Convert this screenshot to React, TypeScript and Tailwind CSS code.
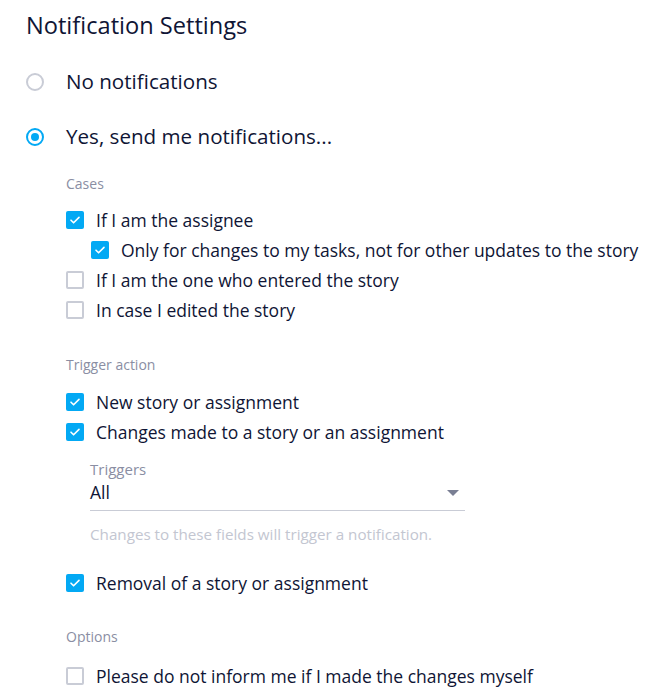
import React, { useState } from 'react';

const Check: React.FC<{ checked: boolean; onChange: () => void; label: string }> = ({ checked, onChange, label }) => (
  <label className="flex items-center h-[30px] cursor-pointer" onClick={onChange}>
    <span
      className={`w-[18px] h-[18px] rounded-[2px] flex items-center justify-center shrink-0 ${
        checked ? 'bg-[#03a9f4]' : 'border-2 border-[#c9ccd6] bg-white'
      }`}
    >
      {checked && (
        <svg width="12" height="12" viewBox="0 0 12 12" fill="none">
          <path d="M2 6.2l2.6 2.6L10 3.4" stroke="white" strokeWidth="1.6" strokeLinecap="round" strokeLinejoin="round" />
        </svg>
      )}
    </span>
    <span className="ml-[12px] text-[17.5px] text-[#0f1535]">{label}</span>
  </label>
);

const Radio: React.FC<{ checked: boolean; onChange: () => void; label: string }> = ({ checked, onChange, label }) => (
  <label className="flex items-center h-[55px] cursor-pointer" onClick={onChange}>
    <span
      className={`w-[18px] h-[18px] rounded-full flex items-center justify-center shrink-0 border-2 ${
        checked ? 'border-[#03a9f4]' : 'border-[#c9ccd6]'
      }`}
    >
      {checked && <span className="w-[8px] h-[8px] rounded-full bg-[#03a9f4]" />}
    </span>
    <span className="ml-[22px] text-[20.6px] text-[#0f1535]">{label}</span>
  </label>
);

const SectionLabel: React.FC<{ children: React.ReactNode }> = ({ children }) => (
  <div className="text-[14px] text-[#8a8ea3] h-[20px] leading-[20px]">{children}</div>
);

const App: React.FC = () => {
  const [enabled, setEnabled] = useState(true);
  const [c, setC] = useState<Record<string, boolean>>({
    assignee: true,
    onlyTasks: true,
    entered: false,
    edited: false,
    newStory: true,
    changes: true,
    removal: true,
    notMine: false,
  });
  const toggle = (k: string) => setC(prev => ({ ...prev, [k]: !prev[k] }));

  return (
    <div className="w-[660px] h-[696px] bg-white overflow-hidden pl-[26px] pt-[10px]" style={{ fontFamily: '"Open Sans", sans-serif' }}>
      <h1 className="text-[23.6px] leading-[30px] text-[#0f1535]">Notification Settings</h1>

      {/* Radios */}
      <div className="mt-[14px]">
        <Radio checked={!enabled} onChange={() => setEnabled(false)} label="No notifications" />
        <Radio checked={enabled} onChange={() => setEnabled(true)} label="Yes, send me notifications..." />
      </div>

      <div className="pl-[40px] mt-[10px]">
        {/* Cases */}
        <SectionLabel>Cases</SectionLabel>
        <div className="mt-[11px]">
          <Check checked={c.assignee} onChange={() => toggle('assignee')} label="If I am the assignee" />
          <div className="pl-[25px]">
            <Check checked={c.onlyTasks} onChange={() => toggle('onlyTasks')} label="Only for changes to my tasks, not for other updates to the story" />
          </div>
          <Check checked={c.entered} onChange={() => toggle('entered')} label="If I am the one who entered the story" />
          <Check checked={c.edited} onChange={() => toggle('edited')} label="In case I edited the story" />
        </div>

        {/* Trigger action */}
        <div className="mt-[30px]">
          <SectionLabel>Trigger action</SectionLabel>
        </div>
        <div className="mt-[12px]">
          <Check checked={c.newStory} onChange={() => toggle('newStory')} label="New story or assignment" />
          <Check checked={c.changes} onChange={() => toggle('changes')} label="Changes made to a story or an assignment" />
        </div>

        {/* Triggers select */}
        <div className="pl-[24px] mt-[12px] w-[399px]">
          <div className="text-[15px] leading-[20px] text-[#8a8ea3]">Triggers</div>
          <div className="flex items-center justify-between border-b border-[#c9ccd6] h-[32px] pb-[4px]">
            <span className="text-[17.5px] text-[#0f1535]">All</span>
            <svg width="12" height="6" viewBox="0 0 12 6" className="mr-[6px]">
              <path d="M0 0h12L6 6z" fill="#7a7f94" />
            </svg>
          </div>
          <div className="mt-[13px] text-[15.2px] leading-[20px] text-[#c3c6d1]">
            Changes to these fields will trigger a notification.
          </div>
        </div>

        <div className="mt-[24px]">
          <Check checked={c.removal} onChange={() => toggle('removal')} label="Removal of a story or assignment" />
        </div>

        {/* Options */}
        <div className="mt-[29px]">
          <SectionLabel>Options</SectionLabel>
        </div>
        <div className="mt-[14px]">
          <Check checked={c.notMine} onChange={() => toggle('notMine')} label="Please do not inform me if I made the changes myself" />
        </div>
      </div>
    </div>
  );
};

export default App;
